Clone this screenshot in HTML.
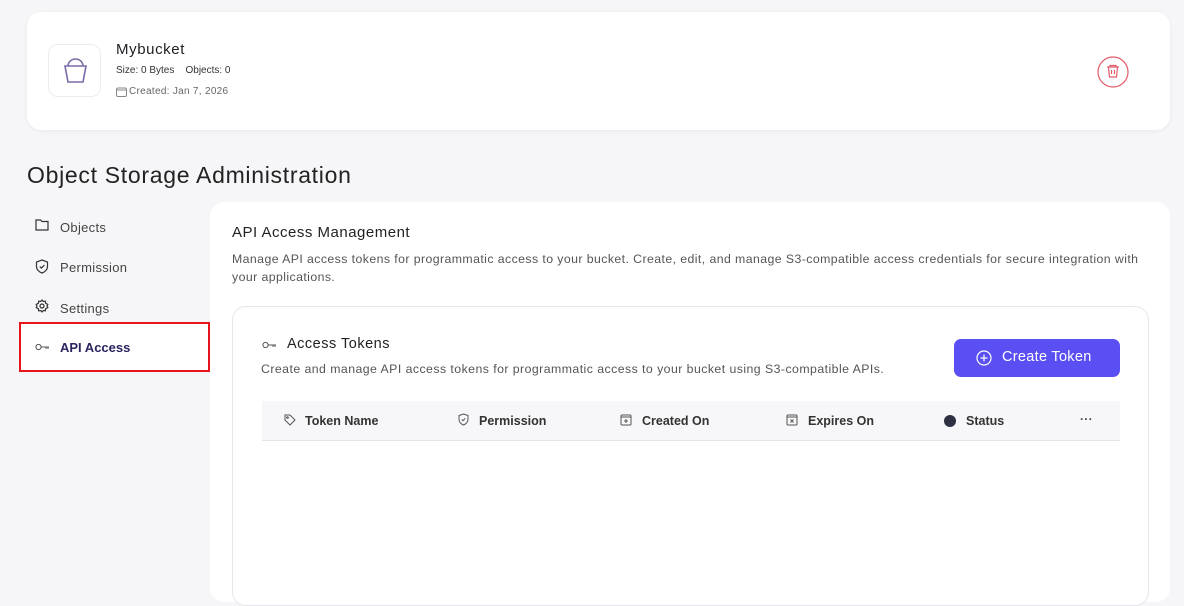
<!DOCTYPE html>
<html><head><style>
*{margin:0;padding:0;box-sizing:border-box}
body{width:1184px;height:571px;background:#f6f6f8;font-family:"Liberation Sans",sans-serif;color:#1f1f24;position:relative;overflow:hidden;letter-spacing:.3px}
.abs{position:absolute}
.card{left:27px;top:12px;width:1143px;height:118px;background:#fff;border-radius:14px;box-shadow:0 1px 4px rgba(0,0,0,.06)}
.ib{left:48px;top:44px;width:53px;height:53px;border:1px solid #ececef;border-radius:10px;background:#fff}
.side{font-size:13px;color:#444}
.side svg{position:absolute;left:35px}
.main{left:210px;top:202px;width:960px;height:400px;background:#fff;border-radius:14px}
.inner{left:232px;top:306px;width:917px;height:300px;border:1px solid #e6e6ea;border-radius:14px;background:#fff}
.th{font-size:12.5px;font-weight:bold;color:#333;letter-spacing:0}
</style></head><body>
<div class="abs card"></div>
<div class="abs ib"><svg class="abs" style="left:13px;top:11px" width="27" height="30" viewBox="0 0 27 30" fill="none" stroke="#7b6aa8" stroke-width="1.6"><path d="M6 10a7.5 7 0 0 1 15 0"/><path d="M3 10h21l-3 16h-15z"/></svg></div>
<div class="abs" style="left:116px;top:41px;font-size:15px;letter-spacing:.6px">Mybucket</div>
<div class="abs" style="left:116px;top:65px;font-size:10px;color:#333;letter-spacing:0">Size: 0 Bytes&nbsp;&nbsp;&nbsp;&nbsp;Objects: 0</div>
<svg class="abs" style="left:116px;top:87px" width="11" height="10" viewBox="0 0 11 10" fill="none" stroke="#888" stroke-width="1"><rect x=".5" y="1" width="10" height="8.5" rx="1.5"/><path d="M.5 3h10"/></svg>
<div class="abs" style="left:129px;top:86px;font-size:10px;color:#666">Created: Jan 7, 2026</div>
<svg class="abs" style="left:1097px;top:56px" width="32" height="32" viewBox="0 0 32 32" fill="none" stroke="#e25b6a" stroke-width="1.2"><circle cx="16" cy="16" r="15"/><path d="M10 11h12M13 11v-1.5h6V11M11.5 11l1 10h7l1-10M14.5 14v4M17.5 14v4"/></svg>
<div class="abs" style="left:27px;top:162px;font-size:23px;color:#222;letter-spacing:.7px">Object Storage Administration</div>
<div class="abs side" style="top:219px;left:0;width:200px">
<svg style="top:0" width="14" height="12" viewBox="0 0 14 12" fill="none" stroke="#333" stroke-width="1.2"><path d="M1 1h4.5l1.5 1.5h6v8.5h-12z"/></svg><span class="abs" style="left:60px;top:1px">Objects</span></div>
<div class="abs side" style="top:259px;left:0;width:200px">
<svg style="top:0" width="14" height="15" viewBox="0 0 14 15" fill="none" stroke="#333" stroke-width="1.2"><path d="M7 1l5.5 2v4.5c0 3-2.5 5.5-5.5 6.5-3-1-5.5-3.5-5.5-6.5V3z"/><path d="M4.8 7.5l1.6 1.6 3-3"/></svg><span class="abs" style="left:60px;top:1px">Permission</span></div>
<div class="abs side" style="top:299px;left:0;width:200px">
<svg style="top:0" width="14" height="14" viewBox="0 0 14 14" fill="none" stroke="#333" stroke-width="1.2"><circle cx="7" cy="7" r="2"/><path d="M7 1l1.3 1.5 2-.3.3 2L12.8 5.5 12 7l.8 1.5-2.2 1.3-.3 2-2 -.3L7 13l-1.3-1.5-2 .3-.3-2L1.2 8.5 2 7l-.8-1.5 2.2-1.3.3-2 2 .3z"/></svg><span class="abs" style="left:60px;top:2px">Settings</span></div>
<div class="abs" style="left:19px;top:322px;width:191px;height:50px;border:2px solid #e8141b;background:#fff"></div>
<svg class="abs" style="left:35px;top:343px" width="15" height="8" viewBox="0 0 15 8" fill="none" stroke="#555" stroke-width="1"><circle cx="3.5" cy="4" r="2.6"/><path d="M6 4h8M11 4v2M13 4v2"/></svg>
<div class="abs" style="left:60px;top:340px;font-size:13px;font-weight:bold;color:#2a2560;letter-spacing:0">API Access</div>
<div class="abs main"></div>
<div class="abs" style="left:232px;top:224px;font-size:15px;color:#222;letter-spacing:.5px">API Access Management</div>
<div class="abs" style="left:232px;top:250px;width:925px;font-size:12.3px;line-height:18px;color:#555;letter-spacing:.42px">Manage API access tokens for programmatic access to your bucket. Create, edit, and manage S3-compatible access credentials for secure integration with your applications.</div>
<div class="abs inner"></div>
<svg class="abs" style="left:262px;top:341px" width="15" height="8" viewBox="0 0 15 8" fill="none" stroke="#555" stroke-width="1"><circle cx="3.5" cy="4" r="2.6"/><path d="M6 4h8M11 4v2M13 4v2"/></svg>
<div class="abs" style="left:287px;top:336px;font-size:14.5px;color:#222;letter-spacing:.5px">Access Tokens</div>
<div class="abs" style="left:261px;top:362px;font-size:12.3px;color:#555;letter-spacing:.45px">Create and manage API access tokens for programmatic access to your bucket using S3-compatible APIs.</div>
<div class="abs" style="left:954px;top:339px;width:166px;height:38px;background:#5a4ff3;border-radius:7px;color:#fff;font-size:14.5px">
<svg class="abs" style="left:22px;top:11px" width="16" height="16" viewBox="0 0 16 16" fill="none" stroke="#fff" stroke-width="1.2"><circle cx="8" cy="8" r="7"/><path d="M8 4.5v7M4.5 8h7"/></svg><span class="abs" style="left:48px;top:10px">Create Token</span></div>
<div class="abs" style="left:262px;top:401px;width:858px;height:40px;background:#f7f7f9;border-bottom:1px solid #e4e4e8"></div>
<svg class="abs" style="left:284px;top:414px" width="12" height="12" viewBox="0 0 12 12" fill="none" stroke="#555" stroke-width="1"><path d="M1 1h5l5 5-5 5-5-5z"/><circle cx="3.5" cy="3.5" r=".8"/></svg>
<div class="abs th" style="left:305px;top:414px">Token Name</div>
<svg class="abs" style="left:458px;top:413px" width="11" height="13" viewBox="0 0 11 13" fill="none" stroke="#555" stroke-width="1"><path d="M5.5 1l4.5 1.5v3.5c0 3-2 5-4.5 6-2.5-1-4.5-3-4.5-6V2.5z"/><path d="M3.8 6.5l1.2 1.2 2.2-2.4"/></svg>
<div class="abs th" style="left:479px;top:414px">Permission</div>
<svg class="abs" style="left:620px;top:413px" width="12" height="13" viewBox="0 0 12 13" fill="none" stroke="#555" stroke-width="1"><rect x="1" y="2" width="10" height="10" rx="1"/><path d="M1 4h10M6 6v4M4 8h4"/></svg>
<div class="abs th" style="left:642px;top:414px">Created On</div>
<svg class="abs" style="left:786px;top:413px" width="12" height="13" viewBox="0 0 12 13" fill="none" stroke="#555" stroke-width="1"><rect x="1" y="2" width="10" height="10" rx="1"/><path d="M1 4h10M4.5 6.5l3 3M7.5 6.5l-3 3"/></svg>
<div class="abs th" style="left:808px;top:414px">Expires On</div>
<div class="abs" style="left:944px;top:415px;width:12px;height:12px;border-radius:50%;background:#2d3142"></div>
<div class="abs th" style="left:966px;top:414px">Status</div>
<div class="abs" style="left:1080px;top:412px;font-size:12px;font-weight:bold;color:#444">···</div>
</body></html>
